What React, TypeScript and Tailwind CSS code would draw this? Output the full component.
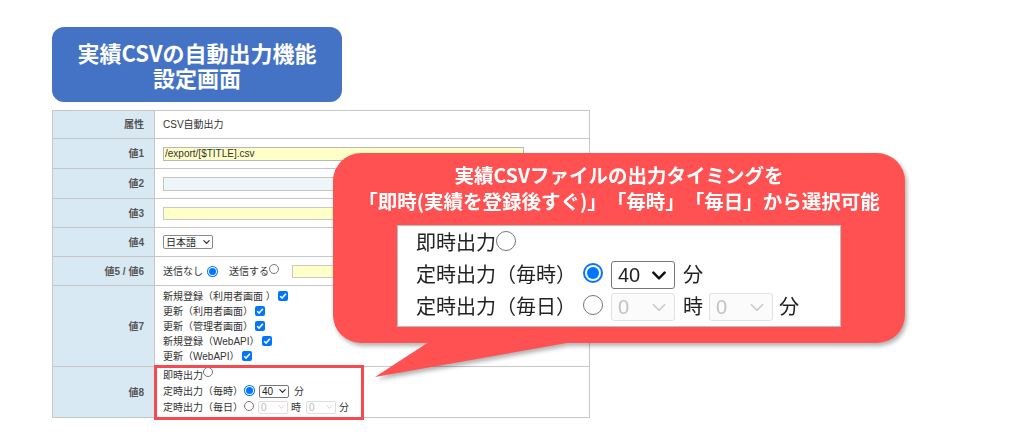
import type { ReactNode } from "react";

type RadioProps = { checked?: boolean; big?: boolean; className?: string };

function Radio({ checked, big, className = "" }: RadioProps) {
  if (big) {
    return checked ? (
      <span className={`inline-flex h-[20px] w-[20px] shrink-0 items-center justify-center rounded-full bg-[#0075ff] ${className}`}>
        <span className="flex h-[16px] w-[16px] items-center justify-center rounded-full bg-white">
          <span className="h-[12px] w-[12px] rounded-full bg-[#0075ff]" />
        </span>
      </span>
    ) : (
      <span className={`inline-block h-[20px] w-[20px] shrink-0 rounded-full border-[1.5px] border-[#767676] bg-white ${className}`} />
    );
  }
  return checked ? (
    <span className={`inline-flex h-[11px] w-[11px] shrink-0 items-center justify-center rounded-full bg-[#0075ff] ${className}`}>
      <span className="flex h-[9px] w-[9px] items-center justify-center rounded-full bg-white">
        <span className="h-[7px] w-[7px] rounded-full bg-[#0075ff]" />
      </span>
    </span>
  ) : (
    <span className={`inline-block h-[10px] w-[10px] shrink-0 rounded-full border border-[#767676] bg-white ${className}`} />
  );
}

function Check() {
  return (
    <span className="ml-[2px] inline-flex h-[10px] w-[10px] shrink-0 items-center justify-center rounded-[2px] bg-[#0075ff]">
      <svg viewBox="0 0 10 10" className="h-[10px] w-[10px]" aria-hidden>
        <path d="M2.2 5.2l1.9 1.9 3.8-4.3" fill="none" stroke="white" strokeWidth="1.6" />
      </svg>
    </span>
  );
}

function Chevron({ className, color, width = 1.4 }: { className: string; color: string; width?: number }) {
  return (
    <svg viewBox="0 0 10 6" className={className} aria-hidden>
      <path d="M1 1l4 4 4-4" fill="none" stroke={color} strokeWidth={width} strokeLinecap="round" strokeLinejoin="round" />
    </svg>
  );
}

function MiniSelect({ value, disabled }: { value: string; disabled?: boolean }) {
  return (
    <span
      className={`inline-flex h-[13px] w-[30px] shrink-0 items-center justify-between rounded-[2px] border px-[2px] ${
        disabled ? "border-[#dedede] text-[#bbbbbb]" : "border-[#767676] text-[#222]"
      }`}
    >
      <span>{value}</span>
      <Chevron className="h-[4px] w-[7px]" color={disabled ? "#c4c4c4" : "#222"} width={disabled ? 1.1 : 1.6} />
    </span>
  );
}

function BigSelect({ value, disabled }: { value: string; disabled?: boolean }) {
  return (
    <span
      className={`inline-flex h-[28px] w-[64px] shrink-0 items-center justify-between rounded-[3px] border pl-[6px] pr-[8px] ${
        disabled ? "border-[#e2e2e2] bg-[#fbfbfb] text-[#c2c2c2]" : "border-[#767676] text-[#222]"
      }`}
    >
      <span>{value}</span>
      <Chevron className="h-[9px] w-[14px]" color={disabled ? "#c6c6c6" : "#111"} width={disabled ? 1.1 : 1.8} />
    </span>
  );
}

function Row({ label, h, children }: { label: string; h: string; children: ReactNode }) {
  return (
    <div className={`grid grid-cols-[102px_1fr] border-b border-[#c6c6c6] ${h}`}>
      <div className="flex items-center justify-end border-r border-[#c6c6c6] bg-[#d9e9f3] pr-[10px] font-bold text-[#555]">
        {label}
      </div>
      <div className="relative flex items-center pl-[8px] text-[#333]">{children}</div>
    </div>
  );
}

const checks = ["新規登録（利用者画面 ）", "更新（利用者画面）", "更新（管理者画面）", "新規登録（WebAPI）", "更新（WebAPI）"];

export default function App() {
  return (
    <div className="relative h-[445px] w-[1024px] overflow-hidden bg-white [text-spacing-trim:space-all]">
      <div className="ml-[52px] pt-[27px]">
        <div className="flex h-[75px] w-[290px] flex-col items-center justify-center rounded-[12px] bg-[#4472c4] font-['Noto_Sans_CJK_JP',sans-serif] text-[22px] leading-[25px] font-bold text-white">
          <span>実績CSVの自動出力機能</span>
          <span>設定画面</span>
        </div>

        <div className="mt-[8px] w-[538px] border-x border-t border-[#c6c6c6] font-['Liberation_Sans','Noto_Sans_CJK_JP',sans-serif] text-[10px] leading-[15px]">
          <Row label="属性" h="h-[28px]">
            CSV自動出力
          </Row>
          <Row label="値1" h="h-[30px]">
            <span className="flex h-[14px] w-[361px] items-center border border-[#b8b8b8] bg-[#ffffc8] pl-[1px] text-[#333]">
              /export/[$TITLE].csv
            </span>
          </Row>
          <Row label="値2" h="h-[30px]">
            <span className="h-[14px] w-[361px] border border-[#c4c4c4] bg-[#eff6fa]" />
          </Row>
          <Row label="値3" h="h-[29px]">
            <span className="h-[13px] w-[361px] border border-[#c8c8c8] bg-[#ffffc8]" />
          </Row>
          <Row label="値4" h="h-[29px]">
            <span className="inline-flex h-[14px] w-[50px] items-center justify-between rounded-[2px] border border-[#8a8a8a] px-[2px] text-[#222]">
              <span>日本語</span>
              <Chevron className="h-[4px] w-[7px]" color="#222" width={1.6} />
            </span>
          </Row>
          <Row label="値5 / 値6" h="h-[29px]">
            <span>送信なし</span>
            <Radio checked className="ml-[4px]" />
            <span className="ml-[11px]">送信する</span>
            <Radio className="-translate-y-[2px]" />
            <span className="ml-[13px] h-[13px] w-[234px] border border-[#c8c8c8] bg-[#ffffc8]" />
          </Row>
          <Row label="値7" h="h-[81px]">
            <div className="flex flex-col">
              {checks.map((c) => (
                <div key={c} className="flex h-[15px] items-center">
                  <span>{c}</span>
                  <Check />
                </div>
              ))}
            </div>
          </Row>
          <Row label="値8" h="h-[51px]">
            <div className="flex h-full flex-col">
              <div className="flex h-[16px] items-center">
                <span>即時出力</span>
                <Radio className="-translate-y-[3px]" />
              </div>
              <div className="flex h-[16px] items-center">
                <span>定時出力（毎時）</span>
                <Radio checked className="ml-[1px] -translate-y-[1px]" />
                <span className="ml-[4px]">
                  <MiniSelect value="40" />
                </span>
                <span className="ml-[5px]">分</span>
              </div>
              <div className="flex h-[16px] items-center">
                <span>定時出力（毎日）</span>
                <Radio className="ml-[1px] -translate-y-[1px]" />
                <span className="ml-[4px]">
                  <MiniSelect value="0" disabled />
                </span>
                <span className="ml-[3px]">時</span>
                <span className="ml-[5px]">
                  <MiniSelect value="0" disabled />
                </span>
                <span className="ml-[3px]">分</span>
              </div>
            </div>
            <div className="pointer-events-none absolute top-[-2px] left-[-1px] h-[55px] w-[210px] border-[3px] border-[#f44b53]" />
          </Row>
        </div>
      </div>

      {/* callout bubble with tail */}
      <div className="pointer-events-none absolute inset-0 drop-shadow-[2px_3px_2px_rgba(0,0,0,0.3)]">
        <svg className="absolute top-[325px] left-[370px] h-[60px] w-[280px]" viewBox="0 0 280 60" aria-hidden>
          <polygon points="68,11 5,52 270,5" fill="#ff5151" />
        </svg>
        <div className="absolute top-[153px] left-[333px] flex h-[190px] w-[572px] flex-col items-center rounded-[28px] bg-[#ff5151] pt-[9px]">
          <div className="flex flex-col items-center font-['Noto_Sans_CJK_JP',sans-serif] text-[19.5px] leading-[26px] font-bold text-white">
            <span>実績CSVファイルの出力タイミングを</span>
            <span>「即時(実績を登録後すぐ)」「毎時」「毎日」から選択可能</span>
          </div>
          <div className="mt-[11px] flex h-[102px] w-[444px] flex-col border border-[#bdbdbd] bg-white pt-[1px] pl-[18px] font-['Liberation_Sans','Noto_Sans_CJK_JP',sans-serif] text-[20px] text-[#222]">
            <div className="flex h-[32px] items-center">
              <span>即時出力</span>
              <Radio big className="-translate-y-[2px]" />
            </div>
            <div className="flex h-[32px] items-center">
              <span>定時出力（毎時）</span>
              <Radio big checked className="ml-[7px] -translate-y-[2px]" />
              <span className="ml-[8px]">
                <BigSelect value="40" />
              </span>
              <span className="ml-[8px]">分</span>
            </div>
            <div className="flex h-[32px] items-center">
              <span>定時出力（毎日）</span>
              <Radio big className="ml-[7px] -translate-y-[2px]" />
              <span className="ml-[8px]">
                <BigSelect value="0" disabled />
              </span>
              <span className="ml-[8px]">時</span>
              <span className="ml-[6px]">
                <BigSelect value="0" disabled />
              </span>
              <span className="ml-[6px]">分</span>
            </div>
          </div>
        </div>
      </div>
    </div>
  );
}
